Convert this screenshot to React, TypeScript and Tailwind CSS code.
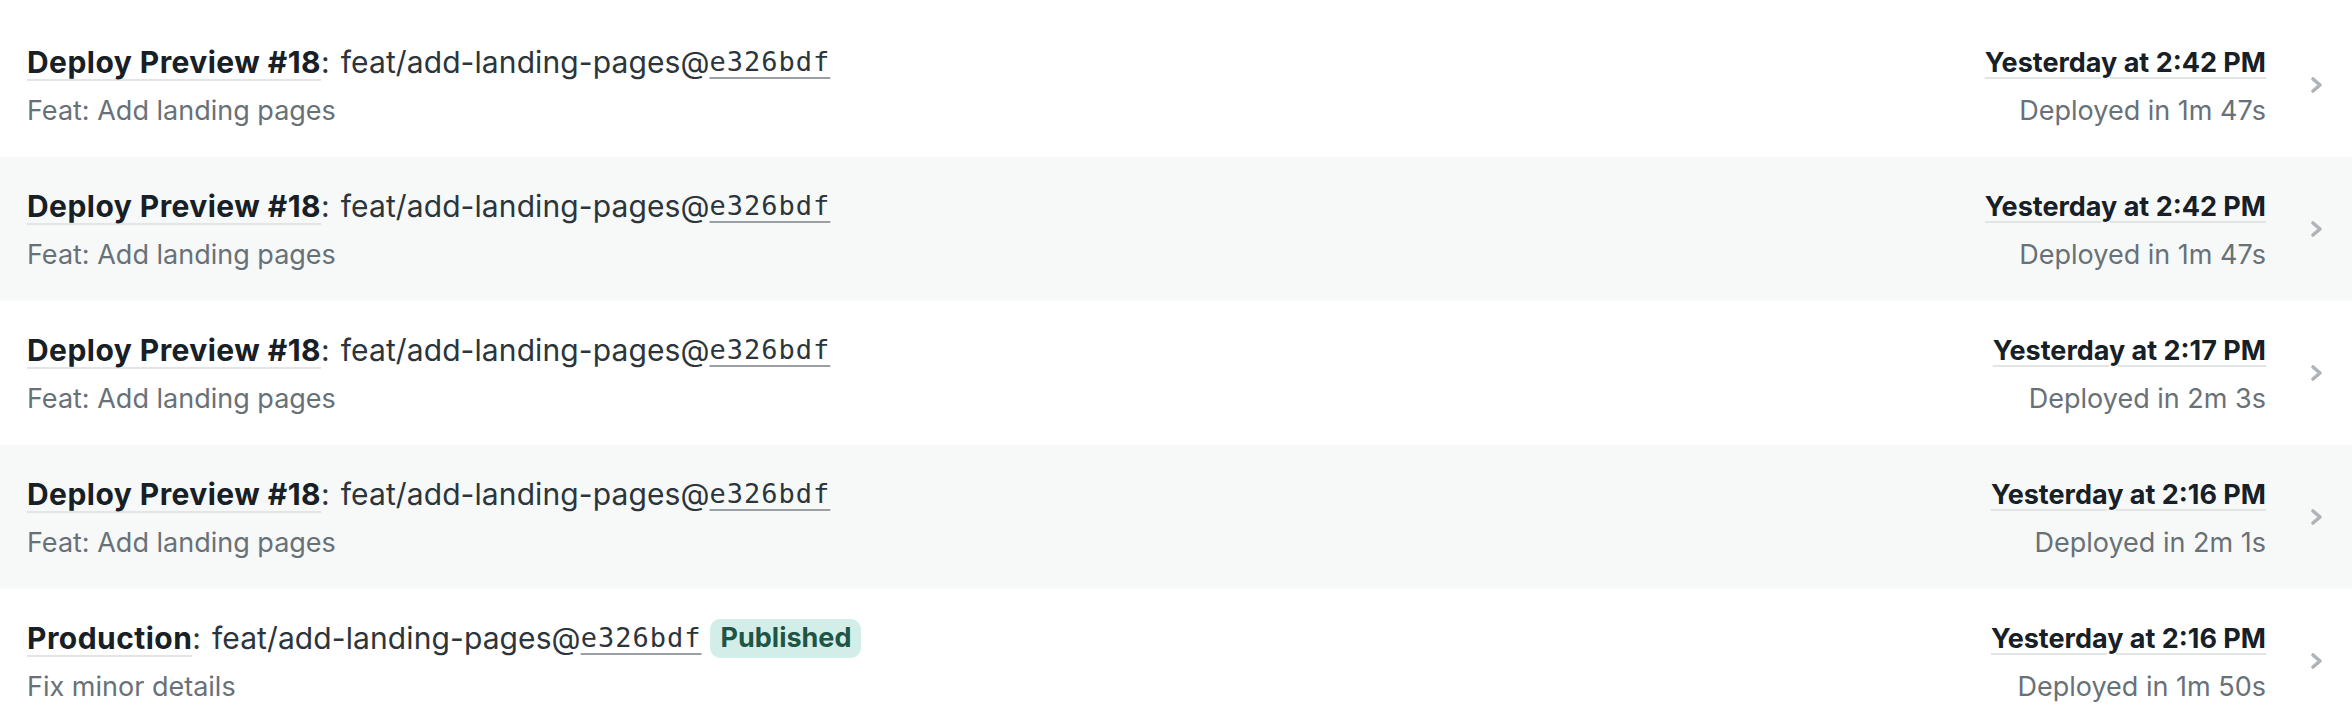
type Deploy = {
  label: string;
  branch: string;
  sha: string;
  message: string;
  time: string;
  duration: string;
  published?: boolean;
};

const deploys: Deploy[] = [
  { label: 'Deploy Preview #18', branch: 'feat/add-landing-pages', sha: 'e326bdf', message: 'Feat: Add landing pages', time: 'Yesterday at 2:42 PM', duration: 'Deployed in 1m 47s' },
  { label: 'Deploy Preview #18', branch: 'feat/add-landing-pages', sha: 'e326bdf', message: 'Feat: Add landing pages', time: 'Yesterday at 2:42 PM', duration: 'Deployed in 1m 47s' },
  { label: 'Deploy Preview #18', branch: 'feat/add-landing-pages', sha: 'e326bdf', message: 'Feat: Add landing pages', time: 'Yesterday at 2:17 PM', duration: 'Deployed in 2m 3s' },
  { label: 'Deploy Preview #18', branch: 'feat/add-landing-pages', sha: 'e326bdf', message: 'Feat: Add landing pages', time: 'Yesterday at 2:16 PM', duration: 'Deployed in 2m 1s' },
  { label: 'Production', branch: 'feat/add-landing-pages', sha: 'e326bdf', message: 'Fix minor details', time: 'Yesterday at 2:16 PM', duration: 'Deployed in 1m 50s', published: true },
];

function Chevron() {
  return (
    <svg viewBox="0 0 14 18" className="ml-[44px] w-[14px] h-[18px] shrink-0">
      <polyline
        points="3,3 10,9 3,15"
        fill="none"
        stroke="#b1b4b6"
        strokeWidth="3.6"
        strokeLinecap="round"
        strokeLinejoin="round"
      />
    </svg>
  );
}

function DeployRow({ d, striped }: { d: Deploy; striped: boolean }) {
  return (
    <li
      className={`flex items-center h-[144px] pl-[27px] pr-[28px] ${
        striped ? 'bg-[#f7f9f9]' : 'bg-white'
      }`}
    >
      <div className="flex flex-col flex-1 min-w-0 pt-[3px]">
        <div className="flex items-center h-[38px] text-[30px] text-[#2c353b]">
          <span className="font-bold tracking-[0.45px] text-[#172026] underline decoration-[#e2e5e6] decoration-2 underline-offset-[6px]">
            {d.label}
          </span>
          <span>:</span>
          <span className="ml-[11px] tracking-[0.1px]">{d.branch}@</span>
          <span className="font-['DejaVu_Sans_Mono',monospace] text-[27px] tracking-[1px] text-[#2c353b] underline decoration-[#9aa0a4] decoration-2 underline-offset-[6px]">
            {d.sha}
          </span>
          {d.published && (
            <span className="ml-[9px] rounded-[10px] bg-[#d3eee8] px-[10px] h-[39px] flex items-center font-bold text-[27px] text-[#1f5546]">
              Published
            </span>
          )}
        </div>
        <div className="mt-[10px] text-[27px] leading-[38px] text-[#687177]">
          {d.message}
        </div>
      </div>
      <div className="flex flex-col items-end pt-[3px]">
        <span className="text-[27px] leading-[38px] font-bold text-[#172026] underline decoration-[#e2e5e6] decoration-2 underline-offset-[5px]">
          {d.time}
        </span>
        <span className="mt-[10px] text-[27px] leading-[38px] text-[#687177]">
          {d.duration}
        </span>
      </div>
      <Chevron />
    </li>
  );
}

export default function App() {
  return (
    <div className="bg-white w-[2352px] h-[720px] overflow-hidden pt-[13px] font-['Inter',sans-serif]">
      <ul>
        {deploys.map((d, i) => (
          <DeployRow key={i} d={d} striped={i % 2 === 1} />
        ))}
      </ul>
    </div>
  );
}
